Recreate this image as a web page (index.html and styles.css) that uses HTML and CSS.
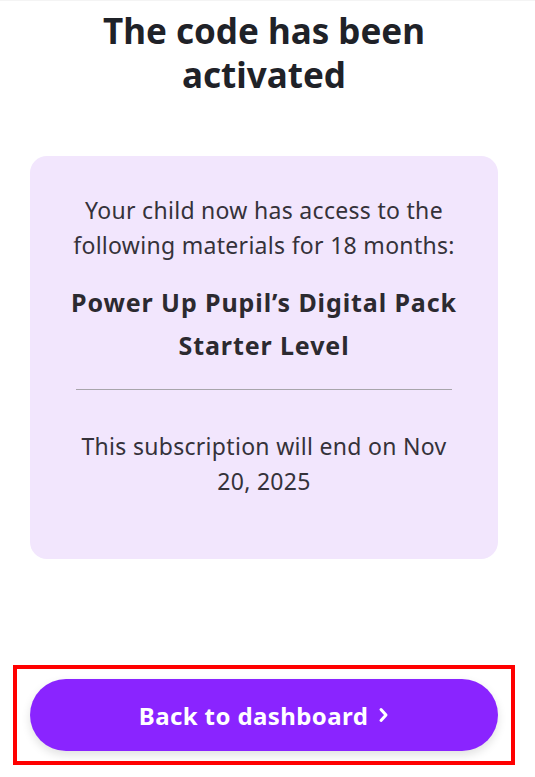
FILE: index.html
```html
<!DOCTYPE html>
<html>
<head>
<meta charset="utf-8">
<link rel="stylesheet" href="styles.css">
</head>
<body>
<div class="page">
  <h1 class="title">The code has been activated</h1>
  <section class="card">
    <p class="lead">Your child now has access to the following materials for 18 months:</p>
    <p class="product">Power Up Pupil’s Digital Pack Starter Level</p>
    <hr class="divider">
    <p class="ends">This subscription will end on Nov 20, 2025</p>
  </section>
  <div class="footer">
    <div class="highlight">
      <button class="btn">Back to dashboard
        <svg class="chev" width="11" height="16" viewBox="0 0 11 16"><path d="M3 2.5 L8 8 L3 13.5" fill="none" stroke="#fff" stroke-width="3" stroke-linecap="round" stroke-linejoin="round"/></svg>
      </button>
    </div>
  </div>
</div>
</body>
</html>
```
FILE: styles.css
```css
html, body {
  margin: 0;
  padding: 0;
  background: #fff;
}
body {
  font-family: "Noto Sans", sans-serif;
  color: #2b2b33;
}
.page {
  min-height: 777px;
  box-sizing: border-box;
  padding: 8px 37px 0 30px;
  display: flex;
  flex-direction: column;
  border-top: 1px solid #f4f4f4;
}
.title {
  margin: 0 20px;
  font-size: 35px;
  line-height: 44px;
  font-weight: 700;
  text-align: center;
  color: #1f2228;
}
.card {
  margin-top: 59px;
  background: #f2e6fd;
  border-radius: 17px;
  padding: 37px 38px 60px;
  text-align: center;
}
.lead, .ends {
  margin: 0;
  font-size: 23px;
  line-height: 35px;
  letter-spacing: 0.3px;
  color: #35323a;
}
.product {
  margin: 18px 0 0;
  font-size: 25px;
  line-height: 43px;
  font-weight: 700;
  letter-spacing: 0.9px;
  color: #2c2a30;
}
.divider {
  margin: 22px 8px 39px;
  border: 0;
  border-top: 1px solid #a8a5ab;
}
.footer {
  margin-top: auto;
  padding-bottom: 12px;
}
.highlight {
  margin: 0 -17px 0 -17px;
  border: 4px solid #ff0000;
  padding: 10px 13px 10px 13px;
}
.btn {
  width: 100%;
  height: 72px;
  border: 0;
  border-radius: 36px;
  background: #8a24ff;
  color: #fff;
  font-family: "Noto Sans", sans-serif;
  font-size: 24px;
  font-weight: 700;
  letter-spacing: 0.4px;
  display: flex;
  align-items: center;
  justify-content: center;
  gap: 10px;
  box-shadow: 0 4px 10px rgba(0,0,0,0.12);
}
.chev {
  display: block;
}
```
